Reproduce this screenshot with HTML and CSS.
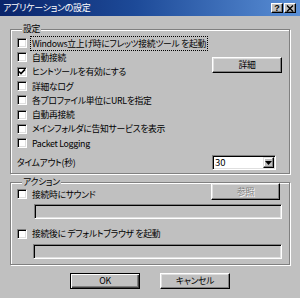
FILE: index.html
```html
<!DOCTYPE html>
<html lang="ja">
<head>
  <meta charset="UTF-8" />
  <title>アプリケーションの設定</title>
  <link rel="stylesheet" href="styles.css">
</head>
<body>
  <div class="dialog">
    <div class="titlebar">
      <span class="title">アプリケーションの設定</span>
      <div class="caption-buttons">
        <span class="cap-btn help">?</span>
        <span class="cap-btn close">
          <svg width="8" height="7" viewBox="0 0 8 7"><path d="M1 0.5 L7 6.5 M7 0.5 L1 6.5" stroke="#000" stroke-width="1.4" fill="none"/></svg>
        </span>
      </div>
    </div>

    <fieldset class="group settings">
      <legend>設定</legend>
      <div class="settings-grid">
        <label class="check"><span class="box"></span><span class="text focused">Windows立上げ時にフレッツ接続ツール を起動</span></label>
        <label class="check"><span class="box"></span><span class="text">自動接続</span></label>
        <label class="check"><span class="box checked"><svg width="8" height="8" viewBox="0 0 8 8"><path d="M1 3.5 L3 5.6 L7 1.4" stroke="#000" stroke-width="1.6" fill="none"/></svg></span><span class="text">ヒントツールを有効にする</span></label>
        <label class="check"><span class="box"></span><span class="text">詳細なログ</span></label>
        <label class="check"><span class="box"></span><span class="text">各プロファイル単位にURLを指定</span></label>
        <label class="check"><span class="box"></span><span class="text">自動再接続</span></label>
        <label class="check"><span class="box"></span><span class="text">メインフォルダに告知サービスを表示</span></label>
        <label class="check"><span class="box"></span><span class="text">Packet Logging</span></label>

        <button class="btn detail">詳細</button>

        <span class="timeout-label">タイムアウト(秒)</span>
        <div class="select">
          <span class="value">30</span>
          <span class="drop"><svg width="7" height="4" viewBox="0 0 7 4"><path d="M0 0 H7 L3.5 4 Z" fill="#000"/></svg></span>
        </div>
      </div>
    </fieldset>

    <fieldset class="group actions">
      <legend>アクション</legend>
      <div class="action-row first">
        <label class="check"><span class="box"></span><span class="text">接続時にサウンド</span></label>
        <button class="btn disabled">参照</button>
      </div>
      <div class="field"></div>
      <div class="action-row second">
        <label class="check"><span class="box"></span><span class="text">接続後に デフォルトブラウザ を起動</span></label>
      </div>
      <div class="field last"></div>
    </fieldset>

    <div class="footer">
      <button class="btn default">OK</button>
      <button class="btn">キャンセル</button>
    </div>
  </div>
</body>
</html>
```

FILE: styles.css
```css
body {
  margin: 0;
  background: #c0c0c0;
  font-family: "Noto Sans CJK JP", "Noto Sans", sans-serif;
  font-size: 8.8px;
  letter-spacing: -0.3px;
  font-feature-settings: "palt";
  color: #000;
}

.dialog {
  width: 300px;
  height: 298px;
  overflow: hidden;
}

.titlebar {
  height: 16px;
  box-sizing: border-box;
  padding: 0 4px 0 3px;
  display: flex;
  align-items: center;
  justify-content: space-between;
  background: linear-gradient(to right, #0a246a, #1d4a98 45%, #5a8fd6);
  color: #fff;
}

.title {
  font-size: 9px;
  line-height: 16px;
}

.caption-buttons {
  display: flex;
  gap: 1px;
}

.cap-btn {
  width: 12px;
  height: 10px;
  box-sizing: border-box;
  display: flex;
  align-items: center;
  justify-content: center;
  background: #c0c0c0;
  border: 1px solid;
  border-color: #fff #000 #000 #fff;
  box-shadow: inset -1px -1px #808080;
  color: #000;
}

.help {
  font-family: "Liberation Sans", sans-serif;
  font-weight: bold;
  font-size: 9px;
  line-height: 8px;
  letter-spacing: 0;
}

.group {
  margin: 0 10px;
  padding: 0;
  border: 1px solid #808080;
  box-shadow: inset 1px 1px #fff, 1px 1px #fff;
  min-inline-size: 0;
}

.group legend {
  padding: 0 1px;
  margin-left: 5px;
  line-height: 12px;
  background: #c0c0c0;
}

.settings {
  margin-top: 7px;
  padding: 1px 7px 3px 6px;
}

.settings-grid {
  display: grid;
  grid-template-columns: 1fr 70px;
  grid-template-rows: repeat(8, 14.3px) 20px;
}

.check {
  grid-column: 1;
  display: flex;
  align-items: center;
  gap: 5px;
  height: 14.3px;
  white-space: nowrap;
}

.box {
  width: 10px;
  height: 10px;
  box-sizing: border-box;
  flex: none;
  display: flex;
  align-items: center;
  justify-content: center;
  background: #fff;
  border: 1px solid;
  border-color: #808080 #fff #fff #808080;
  box-shadow: inset 1px 1px #000, inset -1px -1px #dfdfdf;
}

.focused {
  outline: 1px dotted #000;
  outline-offset: 0;
  padding: 0 1px;
  margin-left: -1px;
}

.btn {
  font: inherit;
  letter-spacing: inherit;
  color: #000;
  background: #c0c0c0;
  height: 16px;
  width: 70px;
  padding: 0;
  box-sizing: border-box;
  border: 1px solid;
  border-color: #fff #000 #000 #fff;
  box-shadow: inset -1px -1px #808080, inset 1px 1px #dfdfdf;
}

.detail {
  grid-column: 2;
  grid-row: 2 / span 2;
  align-self: center;
}

.timeout-label {
  grid-column: 1;
  grid-row: 9;
  align-self: end;
  line-height: 15px;
}

.select {
  grid-column: 2;
  grid-row: 9;
  align-self: end;
  width: 64px;
  height: 15px;
  box-sizing: border-box;
  display: flex;
  align-items: center;
  justify-content: space-between;
  background: #fff;
  border: 1px solid;
  border-color: #808080 #fff #fff #808080;
  box-shadow: inset 1px 1px #000, inset -1px -1px #dfdfdf;
  padding: 1px 1px 1px 2px;
}

.value {
  font-size: 9.5px;
  line-height: 11px;
  letter-spacing: 0;
}

.drop {
  width: 11px;
  height: 11px;
  box-sizing: border-box;
  display: flex;
  align-items: center;
  justify-content: center;
  background: #c0c0c0;
  border: 1px solid;
  border-color: #dfdfdf #000 #000 #dfdfdf;
  box-shadow: inset -1px -1px #808080, inset 1px 1px #fff;
}

.actions {
  margin-top: 2px;
  padding: 0 9px 5px 6px;
}

.action-row {
  display: flex;
  justify-content: space-between;
}

.action-row.first {
  margin-top: -5px;
  height: 17px;
}

.action-row.first .check {
  align-self: end;
  height: 12px;
}

.action-row.first .btn {
  height: 17px;
  width: 69px;
}

.disabled {
  color: #808080;
  text-shadow: 1px 1px #fff;
}

.action-row.second {
  margin-top: 7px;
}

.field {
  height: 15px;
  margin: 4px -2px 0 17px;
  box-sizing: border-box;
  border: 1px solid;
  border-color: #808080 #fff #fff #808080;
  box-shadow: inset 1px 1px #000, inset -1px -1px #dfdfdf;
}

.field.last {
  margin-top: 3px;
  margin-left: 16px;
}

.footer {
  margin-top: 8px;
  display: flex;
  justify-content: center;
  gap: 20px;
}

.default {
  border: 1px solid #000;
  box-shadow: inset 1px 1px #fff, inset -1px -1px #404040, inset -2px -2px #808080;
}
```
